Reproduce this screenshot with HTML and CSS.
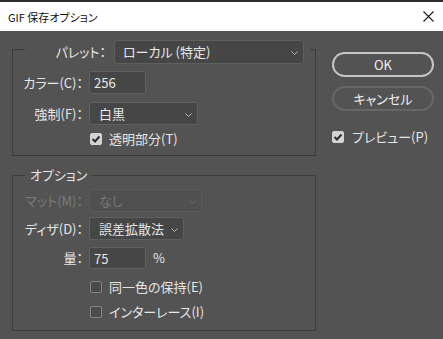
FILE: index.html
```html
<!DOCTYPE html>
<html lang="ja">
<head>
    <meta charset="UTF-8">
    <title>GIF 保存オプション</title>
    <link rel="stylesheet" href="styles.css">
</head>
<body>

    <div class="titlebar">
        <span class="title">GIF 保存オプション</span>
        <svg class="close" width="11" height="11" viewBox="0 0 11 11">
            <path d="M0.5 0.5 L10.5 10.5 M10.5 0.5 L0.5 10.5" stroke="#1a1a1a" stroke-width="1.1" fill="none"/>
        </svg>
    </div>

    <div class="dialog">
        <div class="left">
            <div class="group group-main">
                <div class="head">
                    <span class="label">パレット：</span>
                    <div class="select palette">
                        <span>ローカル (特定)</span>
                        <svg class="chev" width="7" height="4" viewBox="0 0 7 4"><path d="M0.5 0.5 L3.5 3.5 L6.5 0.5" stroke="#b5b5b5" fill="none"/></svg>
                    </div>
                </div>
                <div class="row r-colors">
                    <span class="label">カラー(C)：</span>
                    <div class="input">256</div>
                </div>
                <div class="row r-forced">
                    <span class="label">強制(F)：</span>
                    <div class="select forced">
                        <span>白黒</span>
                        <svg class="chev" width="7" height="4" viewBox="0 0 7 4"><path d="M0.5 0.5 L3.5 3.5 L6.5 0.5" stroke="#b5b5b5" fill="none"/></svg>
                    </div>
                </div>
                <div class="check r-trans">
                    <span class="box checked">
                        <svg width="10" height="8" viewBox="0 0 10 8"><path d="M1.5 4 L4 6.5 L8.5 1.5" stroke="#2e2e2e" stroke-width="2" fill="none"/></svg>
                    </span>
                    <span>透明部分(T)</span>
                </div>
            </div>

            <div class="group group-opt">
                <div class="legend">オプション</div>
                <div class="row r-matte">
                    <span class="label disabled">マット(M)：</span>
                    <div class="select matte is-disabled">
                        <span>なし</span>
                        <svg class="chev" width="7" height="4" viewBox="0 0 7 4"><path d="M0.5 0.5 L3.5 3.5 L6.5 0.5" stroke="#6d6d6d" fill="none"/></svg>
                    </div>
                </div>
                <div class="row r-dither">
                    <span class="label">ディザ(D)：</span>
                    <div class="select dither">
                        <span>誤差拡散法</span>
                        <svg class="chev" width="7" height="4" viewBox="0 0 7 4"><path d="M0.5 0.5 L3.5 3.5 L6.5 0.5" stroke="#b5b5b5" fill="none"/></svg>
                    </div>
                </div>
                <div class="row r-amount">
                    <span class="label">量：</span>
                    <div class="input">75</div>
                    <span class="unit">%</span>
                </div>
                <div class="check r-exact">
                    <span class="box"></span>
                    <span>同一色の保持(E)</span>
                </div>
                <div class="check r-inter">
                    <span class="box"></span>
                    <span>インターレース(I)</span>
                </div>
            </div>
        </div>

        <div class="right">
            <button class="button default">OK</button>
            <button class="button cancel">キャンセル</button>
            <div class="check preview">
                <span class="box checked">
                    <svg width="10" height="8" viewBox="0 0 10 8"><path d="M1.5 4 L4 6.5 L8.5 1.5" stroke="#2e2e2e" stroke-width="2" fill="none"/></svg>
                </span>
                <span>プレビュー(P)</span>
            </div>
        </div>
    </div>

</body>
</html>
```

FILE: styles.css
```css
* {
    box-sizing: border-box;
}
body {
    margin: 0;
    width: 443px;
    height: 339px;
    overflow: hidden;
    background-color: #535353;
    color: #e6e6e6;
    font-family: "Noto Sans CJK JP", "Noto Sans", sans-serif;
    font-size: 13px;
    line-height: 16px;
    font-feature-settings: "palt";
}

/* window title */
.titlebar {
    height: 31px;
    background-color: #fff;
    border-top: 2px solid #2e2e2e;
    display: flex;
    align-items: center;
    justify-content: space-between;
    padding: 0 9px 0 8px;
    color: #111;
    font-size: 11px;
}

.dialog {
    display: flex;
    gap: 16px;
    padding: 18px 0 0 12px;
}
.left {
    width: 304px;
}

/* group boxes */
.group {
    border: 1px solid #3d3d3d;
}
.group-main {
    padding-bottom: 9px;
}
.group-opt {
    margin-top: 19px;
    padding-bottom: 11px;
}
.head {
    display: flex;
    align-items: center;
    height: 24px;
    margin: -10px 5px 0 12px;
    padding-right: 6px;
    background-color: #535353;
}
.head .label {
    width: 81px;
    margin-right: 8px;
}
.legend {
    width: max-content;
    height: 16px;
    margin: -9px 0 0 12px;
    padding: 0 4px 0 5px;
    background-color: #535353;
}

/* rows */
.row {
    display: flex;
    align-items: center;
}
.label {
    width: 70px;
    margin-right: 6px;
    text-align: right;
    white-space: nowrap;
}
.disabled {
    color: #7a7a7a;
}
.r-colors { margin-top: 7px; }
.r-forced { margin-top: 8px; }
.r-matte { margin-top: 6px; }
.r-dither { margin-top: 5px; }
.r-amount { margin-top: 7px; }

.select {
    display: flex;
    align-items: center;
    justify-content: space-between;
    height: 23px;
    padding: 0 5px 0 9px;
    background-color: #464646;
    border: 1px solid #5f5f5f;
    border-radius: 3px;
}
.select .chev {
    margin-top: 2px;
}
.palette {
    width: 190px;
    height: 24px;
    padding-left: 8px;
}
.forced { width: 109px; }
.matte { width: 113px; }
.dither { width: 95px; }
.is-disabled {
    background-color: #505050;
    border-color: #5b5b5b;
    color: #777;
}

.input {
    width: 57px;
    height: 23px;
    padding: 3px 4px;
    background-color: #464646;
    border: 1px solid #606060;
    border-radius: 2px;
}
.r-amount .input {
    height: 22px;
}
.unit {
    margin-left: 7px;
}

/* checkboxes */
.check {
    display: flex;
    align-items: center;
    height: 14px;
    padding-left: 77px;
}
.r-trans { margin-top: 7px; }
.r-exact { margin-top: 11px; }
.r-inter { margin-top: 11px; }
.box {
    display: flex;
    align-items: center;
    justify-content: center;
    width: 12px;
    height: 12px;
    margin-right: 7px;
    border: 1px solid #858585;
    border-radius: 2px;
    background-color: #4a4a4a;
}
.box.checked {
    background-color: #d4d4d4;
    border-color: #d4d4d4;
}

/* buttons */
.right {
    width: 102px;
    padding-top: 3px;
}
.button {
    display: block;
    width: 102px;
    height: 25px;
    padding: 0;
    background-color: #535353;
    color: #f0f0f0;
    border: 2px solid #c6c6c6;
    border-radius: 13px;
    font-family: inherit;
    font-size: 13px;
    font-feature-settings: "palt";
}
.cancel {
    margin-top: 9px;
    border-color: #676767;
}
.preview {
    margin-top: 19px;
    padding-left: 0;
}
.preview .box {
    margin-right: 8px;
}
```
